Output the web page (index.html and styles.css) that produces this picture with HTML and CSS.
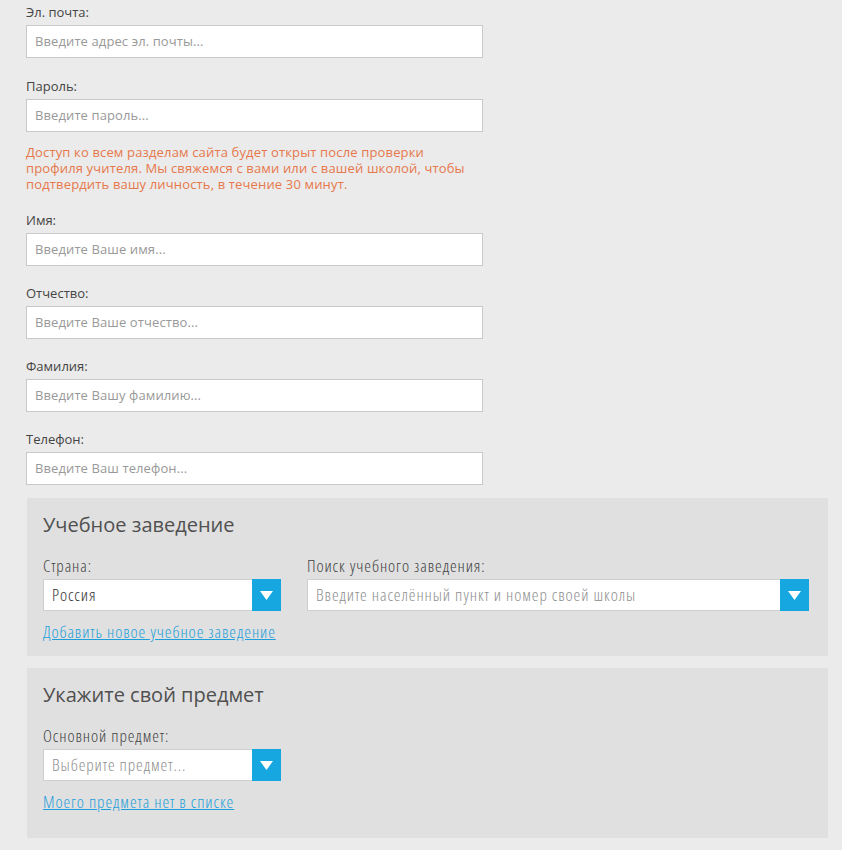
FILE: index.html
```html
<!DOCTYPE html>
<html lang="ru">
<head>
<meta charset="utf-8">
<link rel="stylesheet" href="styles.css">
</head>
<body>
<div class="page">
  <div class="fields">
    <div class="field field-first">
      <label class="label">Эл. почта:</label>
      <div class="input placeholder">Введите адрес эл. почты...</div>
    </div>
    <div class="field field-tight">
      <label class="label">Пароль:</label>
      <div class="input placeholder">Введите пароль...</div>
    </div>
    <p class="notice"><span class="notice-line">Доступ ко всем разделам сайта будет открыт после проверки</span><span class="notice-line">профиля учителя. Мы свяжемся с вами или с вашей школой, чтобы</span><span class="notice-line">подтвердить вашу личность, в течение 30 минут.</span></p>
    <div class="field">
      <label class="label">Имя:</label>
      <div class="input placeholder">Введите Ваше имя...</div>
    </div>
    <div class="field">
      <label class="label">Отчество:</label>
      <div class="input placeholder">Введите Ваше отчество...</div>
    </div>
    <div class="field">
      <label class="label">Фамилия:</label>
      <div class="input placeholder">Введите Вашу фамилию...</div>
    </div>
    <div class="field field-last">
      <label class="label">Телефон:</label>
      <div class="input placeholder">Введите Ваш телефон...</div>
    </div>
  </div>

  <section class="box box-school">
    <h2 class="box-title">Учебное заведение</h2>
    <div class="row">
      <div class="col col-country">
        <label class="clabel">Страна:</label>
        <div class="select">
          <span class="select-text">Россия</span>
          <span class="select-btn"><svg width="13" height="9" viewBox="0 0 13 9"><path d="M0 0H13L6.5 9Z" fill="#fff"/></svg></span>
        </div>
      </div>
      <div class="col col-search">
        <label class="clabel">Поиск учебного заведения:</label>
        <div class="select">
          <span class="select-text muted">Введите населённый пункт и номер своей школы</span>
          <span class="select-btn"><svg width="13" height="9" viewBox="0 0 13 9"><path d="M0 0H13L6.5 9Z" fill="#fff"/></svg></span>
        </div>
      </div>
    </div>
    <a class="link" href="#">Добавить новое учебное заведение</a>
  </section>

  <section class="box box-subject">
    <h2 class="box-title">Укажите свой предмет</h2>
    <div class="col col-country">
      <label class="clabel">Основной предмет:</label>
      <div class="select">
        <span class="select-text muted">Выберите предмет...</span>
        <span class="select-btn"><svg width="13" height="9" viewBox="0 0 13 9"><path d="M0 0H13L6.5 9Z" fill="#fff"/></svg></span>
      </div>
    </div>
    <a class="link" href="#">Моего предмета нет в списке</a>
  </section>
</div>
</body>
</html>
```

FILE: styles.css
```css
html, body {
  margin: 0;
  padding: 0;
  background: #ebebeb;
}
body {
  font-family: "Open Sans", "DejaVu Sans", sans-serif;
  color: #444;
  width: 842px;
  height: 850px;
  overflow: hidden;
}
.page {
  padding: 4px 0 0 26px;
}
.fields {
  width: 457px;
}
.field {
  margin-bottom: 19px;
}
.field-first {
  margin-bottom: 20px;
}
.field-tight {
  margin-bottom: 12px;
}
.field-last {
  margin-bottom: 0;
}
.label {
  display: block;
  font-size: 13px;
  line-height: 16px;
  color: #444;
  margin-bottom: 5px;
}
.input {
  box-sizing: border-box;
  height: 33px;
  background: #fff;
  border: 1px solid #c9c9c9;
  padding: 0 8px;
  font-size: 13px;
  line-height: 31px;
  letter-spacing: 0.1px;
  color: #999;
}
.notice {
  margin: 0 0 20px 0;
  font-size: 13px;
  line-height: 16px;
  letter-spacing: 0.15px;
  color: #e7784b;
}
.notice-line {
  display: block;
  height: 16px;
  white-space: nowrap;
}
.box {
  box-sizing: border-box;
  width: 801px;
  background: #e0e0e0;
  margin: 13px 0 0 1px;
  padding: 13px 16px 0 16px;
}
.box-school {
  height: 158px;
}
.box-subject {
  margin-top: 12px;
  height: 170px;
}
.box-title {
  margin: 0 0 18px 0;
  font-weight: 400;
  font-size: 20px;
  line-height: 28px;
  color: #505050;
}
.row {
  display: flex;
  gap: 26px;
}
.col-country {
  width: 238px;
}
.col-search {
  width: 502px;
}
.clabel,
.select-text,
.link {
  font-size: 17px;
  font-stretch: 75%;
  font-weight: 300;
  letter-spacing: 0.9px;
}
.clabel {
  display: block;
  line-height: 18px;
  color: #444;
  margin-bottom: 4px;
}
.select {
  box-sizing: border-box;
  display: flex;
  height: 32px;
  background: #fff;
  border: 1px solid #cfcfcf;
  border-right: 0;
}
.select-text {
  flex: 1;
  padding: 0 8px;
  line-height: 30px;
  color: #333;
  white-space: nowrap;
  overflow: hidden;
}
.select-text.muted {
  color: #8f8f8f;
}
.select-btn {
  width: 29px;
  margin: -1px 0;
  background: #16a6e0;
  display: flex;
  align-items: center;
  justify-content: center;
}
.select-btn svg {
  display: block;
  margin-top: 1px;
}
.link {
  display: inline-block;
  margin-top: 12px;
  line-height: 18px;
  color: #1f9fd9;
  text-decoration: underline;
}
```
